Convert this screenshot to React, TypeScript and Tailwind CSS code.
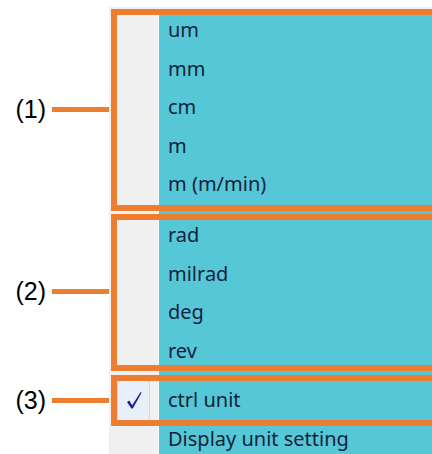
const groups = [
  { label: '(1)', items: ['um', 'mm', 'cm', 'm', 'm (m/min)'] },
  { label: '(2)', items: ['rad', 'milrad', 'deg', 'rev'] },
];

function Callout({ label }: { label: string }) {
  return (
    <div className="flex items-center justify-end">
      <span className="font-['Liberation_Sans',Arial,sans-serif] text-[25px] leading-none text-black">{label}</span>
      <span className="ml-[6px] h-[5px] w-[59px] bg-[#ed7d31]" />
    </div>
  );
}

function Item({ text, checked }: { text: string; checked?: boolean }) {
  return (
    <div className="flex h-[38.5px]">
      <div className="flex w-[49px] items-center bg-[#f0f0f0] pl-[8px]">
        {checked && (
          <div className="flex h-[41px] w-[33px] items-center justify-center rounded-[3px] border border-[#c8daf4] bg-[#e8eff9]">
            <svg width="16" height="19" viewBox="0 0 16 19">
              <path d="M1 11 L3.2 9.6 L6.2 14.2 L14.6 1 L15.6 1.8 L6.8 17.6 L5.4 17.6 Z" fill="#1f1f9a" />
            </svg>
          </div>
        )}
      </div>
      <div className="w-px bg-[#fafafa]" />
      <div className="flex flex-1 items-center bg-[#56c7d7] pl-[9px] font-['Noto_Sans',sans-serif] text-[20px] text-[#15233a]">
        {text}
      </div>
    </div>
  );
}

function Separator({ h }: { h: string }) {
  return (
    <div className={`flex ${h}`}>
      <div className="w-[49px] bg-[#f0f0f0]" />
      <div className="w-px bg-[#fafafa]" />
      <div className="flex-1 bg-[#56c7d7]" />
    </div>
  );
}

export default function App() {
  return (
    <div className="h-[454px] w-[432px] overflow-hidden bg-white pt-[7px]">
      <div className="flex">
        <div className="w-[109px] shrink-0" />
        <div className="h-[4px] flex-1 bg-[#f0f0f0]" />
      </div>

      {/* group 1 */}
      <div className="flex">
        <div className="flex w-[109px] shrink-0 flex-col justify-center pt-[5px]">
          <div className="mr-[-2px]"><Callout label={groups[0].label} /></div>
        </div>
        <div className="relative flex-1">
          {groups[0].items.map((t) => (
            <Item key={t} text={t} />
          ))}
          <div className="pointer-events-none absolute left-[2px] right-[-20px] top-[-2px] bottom-[-7.5px] border-[6px] border-[#ed7d31]" />
        </div>
      </div>

      <div className="flex">
        <div className="w-[109px] shrink-0" />
        <div className="flex-1"><Separator h="h-[12.5px]" /></div>
      </div>

      {/* group 2 */}
      <div className="flex">
        <div className="flex w-[109px] shrink-0 flex-col justify-center pb-[3px]">
          <div className="mr-[-2px]"><Callout label={groups[1].label} /></div>
        </div>
        <div className="relative flex-1">
          {groups[1].items.map((t) => (
            <Item key={t} text={t} />
          ))}
          <div className="pointer-events-none absolute left-[2px] right-[-20px] top-[-2px] bottom-[-1px] border-[6px] border-[#ed7d31]" />
        </div>
      </div>

      <div className="flex">
        <div className="w-[109px] shrink-0" />
        <div className="flex-1"><Separator h="h-[11px]" /></div>
      </div>

      {/* group 3 */}
      <div className="flex">
        <div className="flex w-[109px] shrink-0 flex-col justify-center pt-[1px]">
          <div className="mr-[-2px]"><Callout label="(3)" /></div>
        </div>
        <div className="relative flex-1">
          <Item text="ctrl unit" checked />
          <div className="pointer-events-none absolute left-[2px] right-[-20px] top-[-6px] bottom-[-6.5px] border-[6px] border-[#ed7d31]" />
        </div>
      </div>

      <div className="flex">
        <div className="w-[109px] shrink-0" />
        <div className="flex-1">
          <Item text="Display unit setting" />
        </div>
      </div>
    </div>
  );
}
